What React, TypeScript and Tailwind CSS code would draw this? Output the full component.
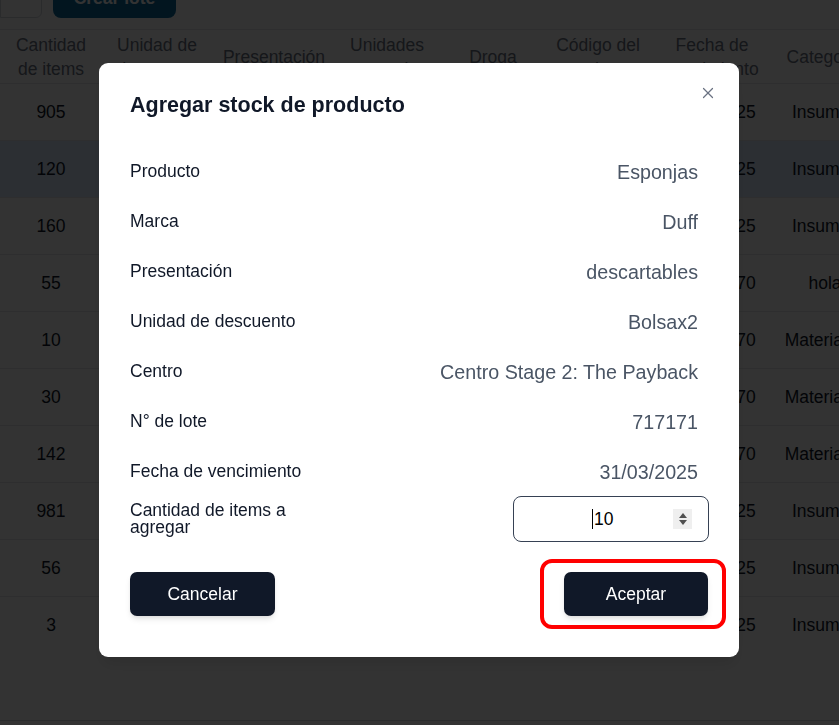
import { X } from 'lucide-react';

const columns = [
  { title: 'Cantidad de items', width: 'w-[102px]' },
  { title: 'Unidad de descuento', width: 'w-[110px]' },
  { title: 'Presentación', width: 'w-[124px]' },
  { title: 'Unidades por caja', width: 'w-[102px]' },
  { title: 'Droga', width: 'w-[110px]' },
  { title: 'Código del producto', width: 'w-[100px]' },
  { title: 'Fecha de vencimiento', width: 'w-[128px]' },
  { title: 'Categoría', width: 'w-[98px]' },
];

const rows = [
  { qty: 905, date: '31/03/2025', cat: 'Insumos' },
  { qty: 120, date: '31/03/2025', cat: 'Insumos', active: true },
  { qty: 160, date: '31/03/2025', cat: 'Insumos' },
  { qty: 55, date: '01/01/2070', cat: 'hola' },
  { qty: 10, date: '01/01/2070', cat: 'Materiales' },
  { qty: 30, date: '01/01/2070', cat: 'Materiales' },
  { qty: 142, date: '01/01/2070', cat: 'Materiales' },
  { qty: 981, date: '31/03/2025', cat: 'Insumos' },
  { qty: 56, date: '31/03/2025', cat: 'Insumos' },
  { qty: 3, date: '31/03/2025', cat: 'Insumos' },
];

const details = [
  { label: 'Producto', value: 'Esponjas' },
  { label: 'Marca', value: 'Duff' },
  { label: 'Presentación', value: 'descartables' },
  { label: 'Unidad de descuento', value: 'Bolsax2' },
  { label: 'Centro', value: 'Centro Stage 2: The Payback' },
  { label: 'N° de lote', value: '717171' },
  { label: 'Fecha de vencimiento', value: '31/03/2025' },
];

function StockTable() {
  return (
    <table className="table-fixed border-collapse w-[874px] text-[17.5px]">
      <colgroup>
        {columns.map((c) => (
          <col key={c.title} className={c.width} />
        ))}
      </colgroup>
      <thead>
        <tr className="h-[54px] border-y border-gray-200">
          {columns.map((c) => (
            <th key={c.title} className="px-1 py-0 font-normal text-gray-500 leading-[24px] text-center">
              {c.title}
            </th>
          ))}
        </tr>
      </thead>
      <tbody>
        {rows.map((r, i) => (
          <tr
            key={i}
            className={`h-[57px] text-gray-900 text-center ${i < rows.length - 1 ? 'border-b border-gray-200' : ''} ${
              r.active ? 'bg-[#dbeafe]' : ''
            }`}
          >
            <td>{r.qty}</td>
            <td>Bolsax2</td>
            <td>descartables</td>
            <td>12</td>
            <td>Ibuprofeno</td>
            <td>A-1021</td>
            <td>{r.date}</td>
            <td className="whitespace-nowrap">{r.cat}</td>
          </tr>
        ))}
      </tbody>
    </table>
  );
}

function QuantityInput() {
  return (
    <div className="relative w-[196px] h-[46px] rounded-[8px] border border-gray-700 bg-white flex items-center justify-center pr-[17px]">
      <span className="w-[1.5px] h-[20px] bg-black mr-[1px]" />
      <span className="text-[17.5px] text-black">10</span>
      <span className="absolute right-[16px] top-[12px] w-[19px] h-[20px] bg-[#efefef] flex flex-col items-center justify-center gap-[2px]">
        <svg width="8" height="5" viewBox="0 0 8 5">
          <path d="M4 0 L8 5 L0 5 Z" fill="#505050" />
        </svg>
        <svg width="8" height="5" viewBox="0 0 8 5">
          <path d="M0 0 L8 0 L4 5 Z" fill="#505050" />
        </svg>
      </span>
    </div>
  );
}

export default function App() {
  return (
    <div className="relative h-[725px] overflow-hidden bg-white font-['Liberation_Sans',Arial,sans-serif]">
      <div className="h-[18px] overflow-hidden flex items-end gap-[11px]">
        <div className="w-[42px] h-[40px] border border-gray-300 rounded-r-md" />
        <button className="w-[123px] h-[40px] rounded-lg bg-[#0a6a9c] text-white text-[17.5px] font-semibold">
          Crear lote
        </button>
      </div>
      <div className="mt-[11px]">
        <StockTable />
      </div>
      <div className="mt-[66px] border-t border-gray-300" />

      <div className="fixed inset-0 bg-black/80 flex justify-start pl-[99px] pt-[63px]">
        <div className="relative w-[640px] h-[594px] bg-white rounded-[9px] shadow-lg pt-[28px] pl-[31px] pr-[30px] pb-[41px] flex flex-col">
          <button className="absolute right-[22px] top-[21px] text-gray-500">
            <X size={18} strokeWidth={1.6} />
          </button>
          <h2 className="text-[21.5px] leading-[28px] font-bold text-gray-900">Agregar stock de producto</h2>

          <div className="mt-[27px] flex flex-col">
            {details.map((d) => (
              <div key={d.label} className="h-[50px] flex items-center justify-between">
                <span className="text-[17.5px] leading-[24px] text-gray-900">{d.label}</span>
                <span className="text-[19.7px] leading-[28px] text-gray-600 pr-[11px] mt-[2px]">{d.value}</span>
              </div>
            ))}
            <div className="h-[46px] flex items-center justify-between">
              <span className="w-[190px] text-[17.5px] leading-[17px] text-gray-900">Cantidad de items a agregar</span>
              <QuantityInput />
            </div>
          </div>

          <div className="mt-[30px] flex justify-between">
            <button className="w-[145px] h-[44px] rounded-[7px] bg-gray-900 text-white text-[17.5px] shadow-md">
              Cancelar
            </button>
            <div className="relative mr-[1px]">
              <button className="w-[144px] h-[44px] rounded-[7px] bg-gray-900 text-white text-[17.5px] shadow-md">
                Aceptar
              </button>
              <span className="absolute -left-[24px] -top-[13px] w-[186px] h-[70px] border-[4px] border-[#ff0000] rounded-[12px] pointer-events-none" />
            </div>
          </div>
        </div>
      </div>
    </div>
  );
}
